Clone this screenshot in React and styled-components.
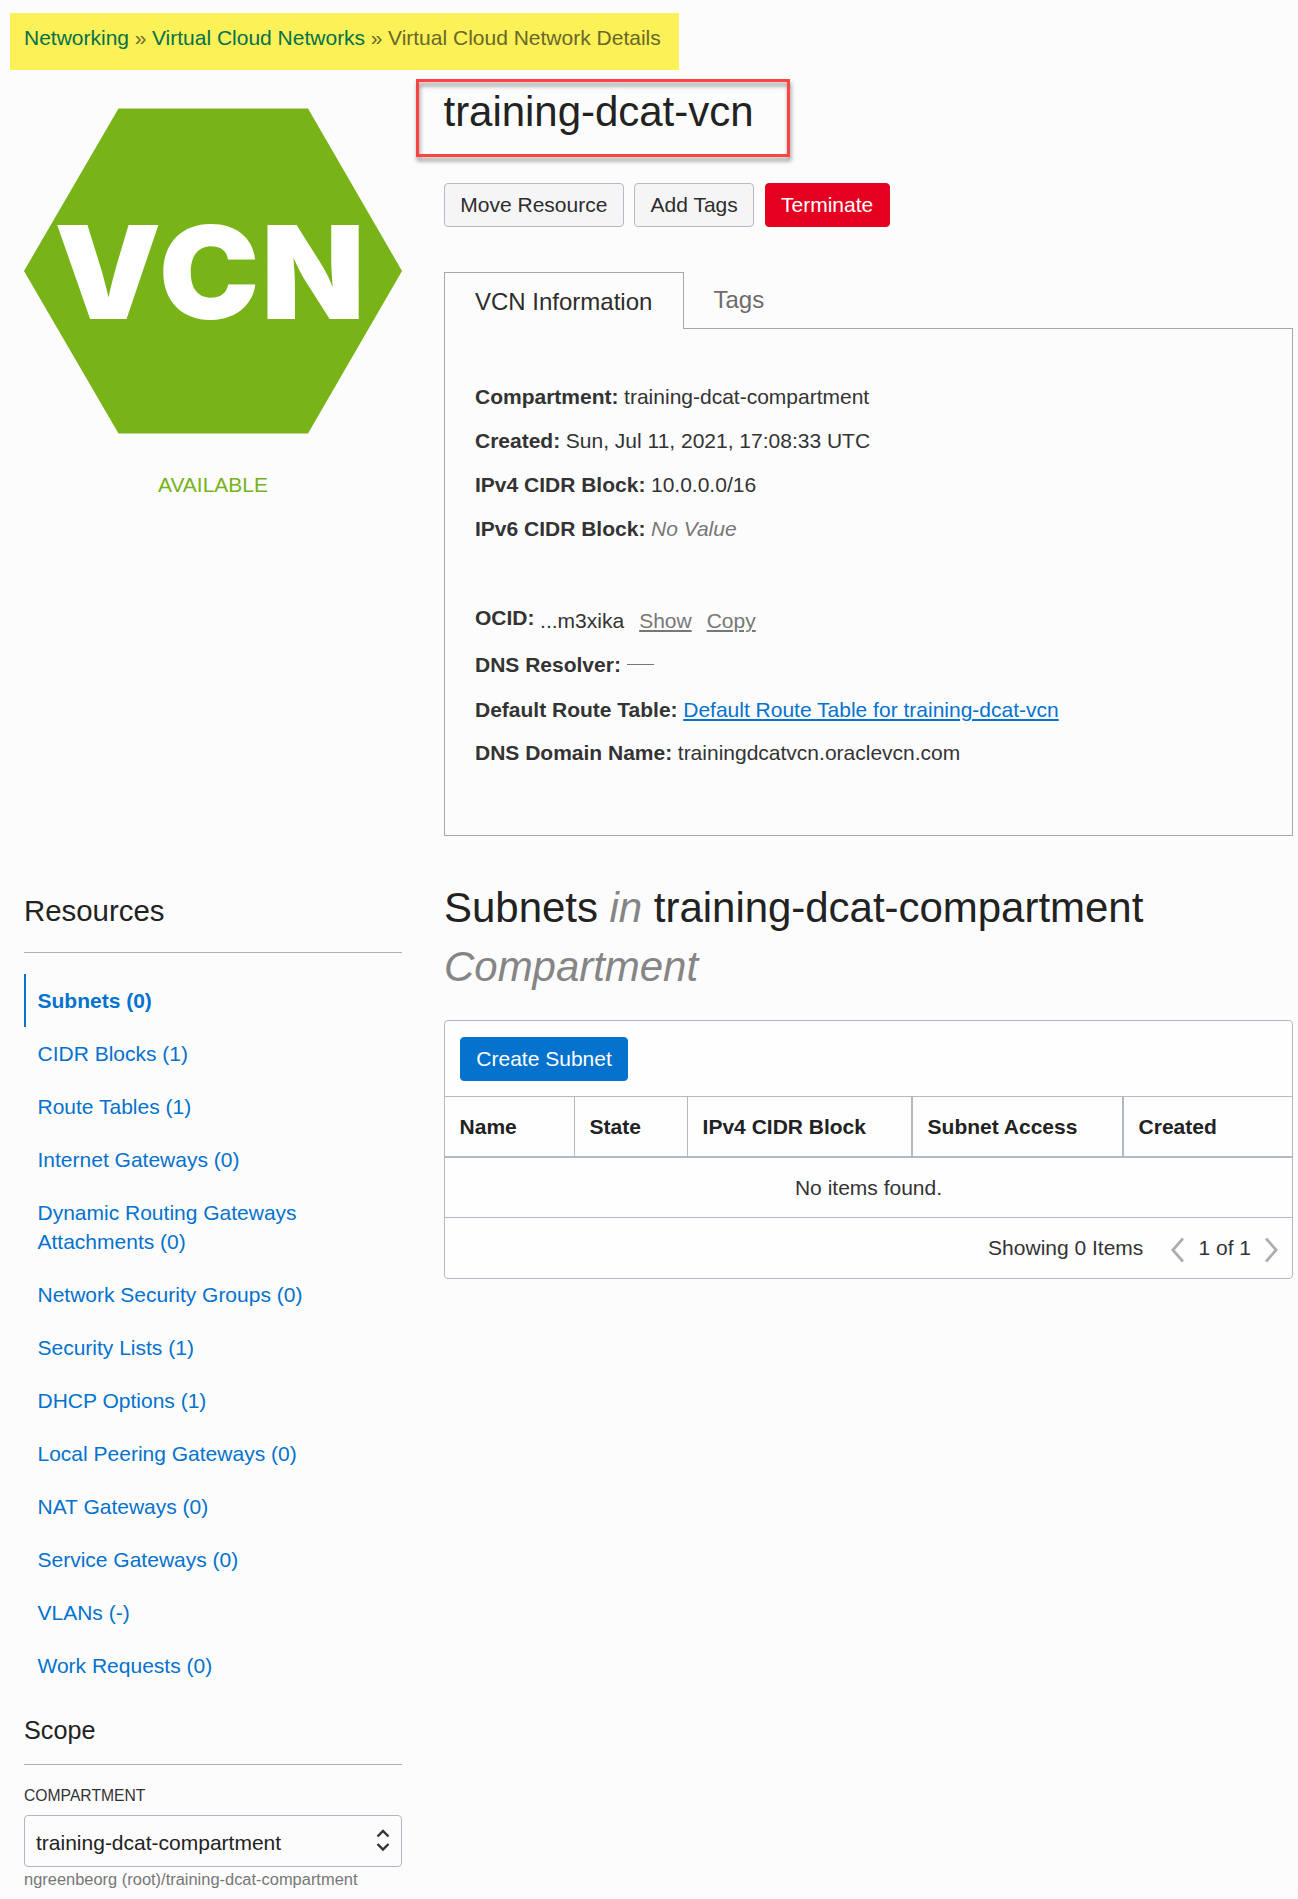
import React from "react";
import styled, { createGlobalStyle, css } from "styled-components";

const GlobalStyle = createGlobalStyle`
  *, *::before, *::after { box-sizing: border-box; }
  body {
    margin: 0;
    background: #fcfcfc;
    color: #333;
    font-family: "Liberation Sans", Arial, sans-serif;
    font-size: 21px;
  }
`;

const Page = styled.div`
  width: 1298px;
  height: 1899px;
  overflow: hidden;
  padding-top: 13px;
`;

const Breadcrumb = styled.nav`
  display: flex;
  gap: 5.6px;
  width: 669px;
  height: 57px;
  margin-left: 10px;
  padding-left: 14px;
  line-height: 50px;
  white-space: nowrap;
  background: #fcf157;
  color: #696829;
`;

const Crumb = styled.a`
  color: #05704c;
`;

const Columns = styled.div`
  display: grid;
  grid-template-columns: 378px 849px;
  column-gap: 42px;
  padding-left: 24px;
`;

const Identity = styled.aside`
  display: flex;
  flex-direction: column;
  align-items: center;
  padding-top: 38px;
`;

const Badge = styled.svg`
  display: block;
  width: 378px;
  height: 326px;
`;

const BadgeText = styled.text`
  fill: #fff;
  font-family: Inter, "Liberation Sans", sans-serif;
  font-weight: 900;
  font-size: 129px;
`;

const Status = styled.div`
  margin-top: 37px;
  line-height: 28px;
  color: #76b318;
`;

const Details = styled.section`
  padding-top: 9px;
`;

const TitleBox = styled.div`
  position: relative;
  width: 374px;
  height: 78px;
  margin-left: -28px;
  padding-left: 27.5px;

  &::after {
    content: "";
    position: absolute;
    inset: 0;
    border: 3px solid #ff4343;
    filter: drop-shadow(1px 4px 2px rgba(0, 0, 0, 0.42));
  }
`;

const Title = styled.h1`
  margin: 0;
  font-size: 42px;
  font-weight: 400;
  line-height: 65px;
  letter-spacing: -0.03px;
  color: #222;
`;

const Actions = styled.div`
  display: flex;
  gap: 10.5px;
  margin-top: 26px;
`;

const variants = {
  plain: css`
    background: #f5f5f5;
    border-color: #b4bbc5;
    color: #2d2d2d;
  `,
  danger: css`
    background: #e5001f;
    border-color: #e5001f;
    color: #fff;
  `,
  primary: css`
    background: #0572ce;
    border-color: #0572ce;
    color: #fff;
  `,
};

const Button = styled.button`
  height: 44px;
  padding: 0 15.35px;
  border: 1px solid;
  border-radius: 4px;
  font: inherit;
  line-height: 42px;
  ${(p) => variants[p.$variant || "plain"]}
`;

const Tabs = styled.div`
  display: flex;
  height: 57px;
  margin-top: 45px;
  font-size: 24px;
`;

const Tab = styled.div`
  position: relative;
  height: 57px;
  padding: ${(p) => (p.$active ? "0 30.6px 0 30px" : "0 28.5px")};
  line-height: ${(p) => (p.$active ? 58 : 54)}px;
  color: ${(p) => (p.$active ? "#2d2d2d" : "#6b6b6b")};
  border: 1px solid ${(p) => (p.$active ? "#a6a8ab" : "transparent")};
  border-bottom: 0;
  background: ${(p) => (p.$active ? "#fcfcfc" : "transparent")};
`;

const Panel = styled.div`
  height: 508px;
  margin-top: -1px;
  padding: 47px 30px 0;
  border: 1px solid #a6a8ab;
`;

const Field = styled.div`
  display: flex;
  gap: 5.6px;
  margin-bottom: ${(p) => p.$after ?? 2}px;
  line-height: 42px;
  white-space: nowrap;
`;

const Label = styled.span`
  font-weight: 700;
`;

const Muted = styled.em`
  color: #777;
`;

const Ocid = styled.span`
  display: flex;
  gap: 15px;
  height: 42px;
  padding-top: 3px;
`;

const TextLink = styled.a`
  color: ${(p) => (p.$muted ? "#777" : "#0572ce")};
  text-decoration: underline;
  text-decoration-thickness: 2px;
  text-underline-offset: 2px;
`;

const Dash = styled.span`
  width: 27px;
  height: 1px;
  margin: 20px 0 0 1px;
  background: #777;
`;

const Sidebar = styled.aside`
  padding-top: 55px;
`;

const SideHeading = styled.h3`
  margin: 0;
  border-bottom: 1px solid #a9b1bd;
  font-weight: 400;
  color: #222;
  font-size: ${(p) => (p.$small ? 25.2 : 29.4)}px;
  line-height: ${(p) => (p.$small ? 32 : 40)}px;
  padding-bottom: ${(p) => (p.$small ? 18 : 21)}px;
`;

const ResourceList = styled.ul`
  margin: 21px 0 22px;
  padding: 0;
  list-style: none;
`;

const Resource = styled.li`
  padding: 12px 80px 12px 11.5px;
  border-left: 2px solid ${(p) => (p.$active ? "#0572ce" : "transparent")};
  font-weight: ${(p) => (p.$active ? 700 : 400)};
  line-height: 29px;
  color: #0572ce;
`;

const FieldCaption = styled.div`
  margin: 21px 0 9px;
  font-size: 15.7px;
  line-height: 20px;
`;

const Select = styled.div`
  display: flex;
  align-items: center;
  justify-content: space-between;
  height: 52px;
  padding: 0 11px 0 11px;
  border: 1px solid #b0b7c3;
  border-radius: 4px;
  color: #222;
`;

const SelectValue = styled.span`
  padding-top: 3px;
`;

const SelectArrows = styled.svg`
  width: 14px;
  height: 24px;
  margin-top: -2px;
  fill: none;
  stroke: #333;
  stroke-width: 2.4;
`;

const PathHint = styled.div`
  font-size: 16.45px;
  line-height: 24px;
  color: #777;
`;

const Main = styled.main`
  padding-top: 42px;
`;

const SectionTitle = styled.h2`
  margin: 0 0 24px;
  font-size: 42px;
  font-weight: 400;
  line-height: 59px;
  letter-spacing: -0.03px;
  color: #222;

  em { color: #858585; }
`;

const TableCard = styled.div`
  height: 259px;
  border: 1px solid #b2b9c4;
  border-radius: 4px;
  background: #fefefe;
`;

const Toolbar = styled.div`
  height: 75px;
  padding: 16px 15px 0;
`;

const HeaderRow = styled.div`
  display: grid;
  grid-template-columns: 130px 113px 225px 211px 1fr;
  height: 62px;
  border-top: 1px solid #b2b9c4;
  border-bottom: 2px solid #b2b9c4;
`;

const HeaderCell = styled.div`
  padding-left: 14.6px;
  border-right: ${(p) => p.$rule}px solid #b2b9c4;
  font-weight: 700;
  line-height: 59px;
  color: #222;
`;

const EmptyRow = styled.div`
  height: 60px;
  border-bottom: 1px solid #b2b9c4;
  text-align: center;
  line-height: 59px;
`;

const Footer = styled.div`
  display: flex;
  align-items: center;
  justify-content: flex-end;
  padding-right: 14px;
  line-height: 60px;
`;

const PageLabel = styled.span`
  margin: 0 14px 0 14.5px;
`;

const Chevron = styled.svg`
  width: 13px;
  height: 26px;
  margin: 4px 0 0 ${(p) => p.$offset || 0}px;
  fill: none;
  stroke: #adadad;
  stroke-width: 2.8;
`;

const resources = [
  "Subnets (0)",
  "CIDR Blocks (1)",
  "Route Tables (1)",
  "Internet Gateways (0)",
  "Dynamic Routing Gateways Attachments (0)",
  "Network Security Groups (0)",
  "Security Lists (1)",
  "DHCP Options (1)",
  "Local Peering Gateways (0)",
  "NAT Gateways (0)",
  "Service Gateways (0)",
  "VLANs (-)",
  "Work Requests (0)",
];

const columns = [
  ["Name", 1],
  ["State", 1],
  ["IPv4 CIDR Block", 2],
  ["Subnet Access", 2],
  ["Created", 0],
];

export default function App() {
  return (
    <>
      <GlobalStyle />
      <Page>
        <Breadcrumb>
          <Crumb>Networking</Crumb>
          <span>»</span>
          <Crumb>Virtual Cloud Networks</Crumb>
          <span>»</span>
          <span>Virtual Cloud Network Details</span>
        </Breadcrumb>

        <Columns>
          <Identity>
            <Badge viewBox="0 0 378 326">
              <polygon points="0,163 94.5,0.4 284,0.4 378,163 284,325.6 94.5,325.6" fill="#78b318" />
              <BadgeText x="29 129 227" y="211" transform="scale(1.045 1)">VCN</BadgeText>
            </Badge>
            <Status>AVAILABLE</Status>
          </Identity>

          <Details>
            <TitleBox>
              <Title>training-dcat-vcn</Title>
            </TitleBox>
            <Actions>
              <Button>Move Resource</Button>
              <Button>Add Tags</Button>
              <Button $variant="danger">Terminate</Button>
            </Actions>
            <Tabs>
              <Tab $active>VCN Information</Tab>
              <Tab>Tags</Tab>
            </Tabs>
            <Panel>
              <Field>
                <Label>Compartment:</Label>
                <span>training-dcat-compartment</span>
              </Field>
              <Field>
                <Label>Created:</Label>
                <span>Sun, Jul 11, 2021, 17:08:33 UTC</span>
              </Field>
              <Field>
                <Label>IPv4 CIDR Block:</Label>
                <span>10.0.0.0/16</span>
              </Field>
              <Field $after={47}>
                <Label>IPv6 CIDR Block:</Label>
                <Muted>No Value</Muted>
              </Field>
              <Field $after={5}>
                <Label>OCID:</Label>
                <Ocid>
                  <span>...m3xika</span>
                  <TextLink $muted>Show</TextLink>
                  <TextLink $muted>Copy</TextLink>
                </Ocid>
              </Field>
              <Field $after={3}>
                <Label>DNS Resolver:</Label>
                <Dash />
              </Field>
              <Field $after={1}>
                <Label>Default Route Table:</Label>
                <TextLink>Default Route Table for training-dcat-vcn</TextLink>
              </Field>
              <Field>
                <Label>DNS Domain Name:</Label>
                <span>trainingdcatvcn.oraclevcn.com</span>
              </Field>
            </Panel>
          </Details>

          <Sidebar>
            <SideHeading>Resources</SideHeading>
            <ResourceList>
              {resources.map((name, i) => (
                <Resource key={name} $active={i === 0}>{name}</Resource>
              ))}
            </ResourceList>
            <SideHeading $small>Scope</SideHeading>
            <FieldCaption>COMPARTMENT</FieldCaption>
            <Select>
              <SelectValue>training-dcat-compartment</SelectValue>
              <SelectArrows viewBox="0 0 14 24">
                <path d="M1.5 8.5 7 3 12.5 8.5M1.5 16 7 21.5 12.5 16" />
              </SelectArrows>
            </Select>
            <PathHint>ngreenbeorg (root)/training-dcat-compartment</PathHint>
          </Sidebar>

          <Main>
            <SectionTitle>
              Subnets <em>in</em> training-dcat-compartment <em>Compartment</em>
            </SectionTitle>
            <TableCard>
              <Toolbar>
                <Button $variant="primary">Create Subnet</Button>
              </Toolbar>
              <HeaderRow>
                {columns.map(([name, rule]) => (
                  <HeaderCell key={name} $rule={rule}>{name}</HeaderCell>
                ))}
              </HeaderRow>
              <EmptyRow>No items found.</EmptyRow>
              <Footer>
                <span>Showing 0 Items</span>
                <Chevron $offset={27.6} viewBox="0 0 13 26"><path d="M12 1.5 1.8 13 12 24.5" /></Chevron>
                <PageLabel>1 of 1</PageLabel>
                <Chevron viewBox="0 0 13 26"><path d="M1 1.5 11.2 13 1 24.5" /></Chevron>
              </Footer>
            </TableCard>
          </Main>
        </Columns>
      </Page>
    </>
  );
}
